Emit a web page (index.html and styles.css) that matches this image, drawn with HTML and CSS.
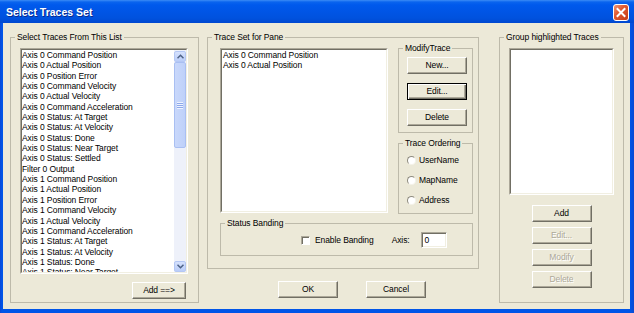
FILE: index.html
```html
<!DOCTYPE html>
<html>
<head>
<meta charset="utf-8">
<title>Select Traces Set</title>
<link rel="stylesheet" href="styles.css">
</head>
<body>
<div class="window">
  <div class="titlebar">
    <span class="title">Select Traces Set</span>
    <svg class="close" width="16" height="17" viewBox="0 0 16 17">
      <defs>
        <linearGradient id="cg" x1="0" y1="0" x2="1" y2="1">
          <stop offset="0" stop-color="#F29C7E"/>
          <stop offset="0.4" stop-color="#E15A31"/>
          <stop offset="1" stop-color="#C23914"/>
        </linearGradient>
      </defs>
      <rect x="0.5" y="0.5" width="15" height="16" rx="2.5" fill="url(#cg)" stroke="#fff"/>
      <path d="M4.5 5 L11.5 12 M11.5 5 L4.5 12" stroke="#fff" stroke-width="2" stroke-linecap="square"/>
    </svg>
  </div>
  <div class="client">
    <fieldset class="group g-source">
      <legend>Select Traces From This List</legend>
      <div class="group-body col">
        <div class="listbox lb-source">
          <div class="lb-inner">
            <ul class="items">
              <li>Axis 0 Command Position</li>
              <li>Axis 0 Actual Position</li>
              <li>Axis 0 Position Error</li>
              <li>Axis 0 Command Velocity</li>
              <li>Axis 0 Actual Velocity</li>
              <li>Axis 0 Command Acceleration</li>
              <li>Axis 0 Status: At Target</li>
              <li>Axis 0 Status: At Velocity</li>
              <li>Axis 0 Status: Done</li>
              <li>Axis 0 Status: Near Target</li>
              <li>Axis 0 Status: Settled</li>
              <li>Filter 0 Output</li>
              <li>Axis 1 Command Position</li>
              <li>Axis 1 Actual Position</li>
              <li>Axis 1 Position Error</li>
              <li>Axis 1 Command Velocity</li>
              <li>Axis 1 Actual Velocity</li>
              <li>Axis 1 Command Acceleration</li>
              <li>Axis 1 Status: At Target</li>
              <li>Axis 1 Status: At Velocity</li>
              <li>Axis 1 Status: Done</li>
              <li>Axis 1 Status: Near Target</li>
            </ul>
            <div class="scrollbar">
              <div class="sb-btn">
                <svg width="7" height="5" viewBox="0 0 7 5"><path d="M0.5 4.2 L3.5 1.2 L6.5 4.2" fill="none" stroke="#4D6185" stroke-width="1.5"/></svg>
              </div>
              <div class="sb-track">
                <div class="sb-thumb"><span class="grip"></span></div>
              </div>
              <div class="sb-btn">
                <svg width="7" height="5" viewBox="0 0 7 5"><path d="M0.5 0.8 L3.5 3.8 L6.5 0.8" fill="none" stroke="#4D6185" stroke-width="1.5"/></svg>
              </div>
            </div>
          </div>
        </div>
        <button class="btn btn-add">Add ==&gt;</button>
      </div>
    </fieldset>

    <div class="middle">
      <fieldset class="group g-pane">
        <legend>Trace Set for Pane</legend>
        <div class="group-body">
          <div class="pane-row">
            <div class="listbox lb-pane">
              <div class="lb-inner">
                <ul class="items pane-items">
                  <li>Axis 0 Command Position</li>
                  <li>Axis 0 Actual Position</li>
                </ul>
              </div>
            </div>
            <div class="side">
              <fieldset class="group g-modify">
                <legend>ModifyTrace</legend>
                <div class="group-body col stack">
                  <button class="btn">New...</button>
                  <button class="btn default">Edit...</button>
                  <button class="btn">Delete</button>
                </div>
              </fieldset>
              <fieldset class="group g-order">
                <legend>Trace Ordering</legend>
                <div class="group-body radios">
                  <div class="radio-row"><span class="radio"></span>UserName</div>
                  <div class="radio-row"><span class="radio"></span>MapName</div>
                  <div class="radio-row"><span class="radio"></span>Address</div>
                </div>
              </fieldset>
            </div>
          </div>
          <fieldset class="group g-band">
            <legend>Status Banding</legend>
            <div class="group-body band-row">
              <span class="check"></span>
              <span class="band-label">Enable Banding</span>
              <span class="axis-label">Axis:</span>
              <span class="field">0</span>
            </div>
          </fieldset>
        </div>
      </fieldset>
      <div class="dialog-buttons">
        <button class="btn">OK</button>
        <button class="btn">Cancel</button>
      </div>
    </div>

    <fieldset class="group g-group">
      <legend>Group highlighted Traces</legend>
      <div class="group-body col center">
        <div class="listbox lb-group"><div class="lb-inner"></div></div>
        <div class="group-buttons">
          <button class="btn">Add</button>
          <button class="btn disabled">Edit...</button>
          <button class="btn disabled">Modify</button>
          <button class="btn disabled">Delete</button>
        </div>
      </div>
    </fieldset>
  </div>
</div>
</body>
</html>
```

FILE: styles.css
```css
html, body {
  margin: 0;
  padding: 0;
}

body {
  background: #ECE9D8;
  font-family: "Liberation Sans", Arial, sans-serif;
  font-size: 8.5px;
  letter-spacing: -0.1px;
  color: #000;
}

.window {
  width: 634px;
  height: 313px;
  display: flex;
  flex-direction: column;
  background: linear-gradient(to right, #0A48D6 0, #0055E8 2px, #0055E8 630px, #0A4AD2 634px);
  overflow: hidden;
}

/* Title bar */
.titlebar {
  height: 23px;
  flex: none;
  display: flex;
  justify-content: space-between;
  align-items: flex-start;
  background: linear-gradient(to bottom, #3C8CF5 0, #0A64EE 2px, #0059EC 5px, #0055E5 12px, #0052DE 18px, #0048D0 23px);
}

.title {
  color: #fff;
  font-weight: bold;
  font-size: 10.5px;
  letter-spacing: 0;
  line-height: 25px;
  padding-left: 6px;
  text-shadow: 1px 1px 0 #0B2A8E;
}

.close {
  margin: 4px 5px 0 0;
  display: block;
}

/* Client area */
.client {
  flex: 1;
  margin: 0 4px 4px 3px;
  background: #ECE9D8;
  display: flex;
  align-items: flex-start;
  padding: 9px 0 0 7px;
}

.group {
  margin: 0;
  padding: 0;
  min-width: 0;
  box-sizing: border-box;
  border: 1px solid #BDBAAA;
}

.group > legend {
  padding: 0 2px;
  margin-left: 4px;
  line-height: 11px;
  height: 11px;
  white-space: nowrap;
}

.group-body.col {
  display: flex;
  flex-direction: column;
}

.group-body.center {
  align-items: center;
}

/* Buttons */
.btn {
  box-sizing: border-box;
  display: block;
  width: 60px;
  height: 17px;
  margin: 0;
  padding: 0;
  font: inherit;
  letter-spacing: inherit;
  line-height: 15px;
  text-align: center;
  color: #000;
  background: #ECE9D8;
  border: 1px solid;
  border-color: #fff #716F64 #716F64 #fff;
  box-shadow: inset -1px -1px 0 #ACA899;
  border-radius: 0;
}

.btn.default {
  border-color: #000;
  box-shadow: inset 1px 1px 0 #fff, inset -1px -1px 0 #716F64, inset -2px -2px 0 #ACA899;
}

.btn.disabled {
  color: #ACA899;
  text-shadow: 1px 1px 0 #fff;
}

/* List boxes */
.listbox {
  box-sizing: border-box;
  border: 1px solid;
  border-color: #ACA899 #fff #fff #ACA899;
  background: #fff;
  flex: none;
}

.lb-inner {
  box-sizing: border-box;
  height: 100%;
  border: 1px solid;
  border-color: #716F64 #F1EFE2 #F1EFE2 #716F64;
  display: flex;
  overflow: hidden;
}

.items {
  list-style: none;
  margin: 0;
  padding: 0;
  flex: 1;
  min-width: 0;
  line-height: 10.35px;
  white-space: nowrap;
  overflow: hidden;
}

.pane-items {
  padding-left: 1px;
}

/* Scrollbar */
.scrollbar {
  width: 12px;
  flex: none;
  display: flex;
  flex-direction: column;
  background: #EEF1FA;
  padding-top: 1px;
}

.sb-btn {
  height: 11px;
  flex: none;
  box-sizing: border-box;
  border: 1px solid #B4C7F4;
  border-radius: 2px;
  background: linear-gradient(to bottom, #D5E1FD, #BACDF8);
  display: flex;
  align-items: center;
  justify-content: center;
}

.sb-btn svg {
  display: block;
}

.sb-track {
  flex: 1;
  display: flex;
  flex-direction: column;
}

.sb-thumb {
  height: 86px;
  box-sizing: border-box;
  border: 1px solid #A9BFF2;
  border-radius: 2px;
  background: linear-gradient(to right, #C9D8FB, #BED0F9);
  display: flex;
  align-items: center;
  justify-content: center;
}

.grip {
  width: 6px;
  height: 7px;
  background: repeating-linear-gradient(to bottom, #EEF3FF 0, #EEF3FF 1px, #8DA8EA 1px, #8DA8EA 2px);
}

/* Left group */
.g-source {
  width: 189px;
  height: 271px;
  flex: none;
}

.lb-source {
  width: 168px;
  height: 226px;
  margin: 5px 0 0 9px;
}

.btn-add {
  width: 54px;
  align-self: flex-end;
  margin: 8px 12px 0 0;
}

/* Middle */
.middle {
  margin-left: 8px;
  width: 272px;
  flex: none;
}

.g-pane {
  width: 272px;
  height: 237px;
}

.pane-row {
  display: flex;
  align-items: flex-start;
  margin-top: 5px;
}

.lb-pane {
  width: 168px;
  height: 165px;
  margin-left: 12px;
}

.side {
  width: 75px;
  margin: -5px 0 0 10px;
  flex: none;
}

.g-modify {
  width: 75px;
  height: 90px;
}

.stack {
  padding: 3px 0 0 8px;
  gap: 9px;
}

.g-order {
  width: 75px;
  height: 76px;
  margin-top: 5px;
}

.radios {
  padding-top: 1px;
}

.radio-row {
  display: flex;
  align-items: center;
  height: 20px;
  padding-left: 8px;
}

.radio {
  width: 9px;
  height: 9px;
  box-sizing: border-box;
  border-radius: 50%;
  border: 1px solid;
  border-color: #8E8B7E #F4F2E8 #F4F2E8 #8E8B7E;
  background: #fff;
  margin-right: 3px;
  flex: none;
}

.g-band {
  width: 253px;
  height: 38px;
  margin: 4px 0 0 12px;
}

.band-row {
  display: flex;
  align-items: center;
  height: 16px;
  margin-top: 3px;
  padding-left: 80px;
}

.check {
  width: 9px;
  height: 9px;
  box-sizing: border-box;
  border: 1px solid;
  border-color: #ACA899 #fff #fff #ACA899;
  box-shadow: inset 1px 1px 0 #716F64;
  background: #fff;
  flex: none;
}

.band-label {
  margin-left: 5px;
}

.axis-label {
  margin-left: 18px;
}

.field {
  box-sizing: border-box;
  width: 26px;
  height: 16px;
  margin-left: 11px;
  padding-left: 3px;
  line-height: 14px;
  background: #fff;
  border: 1px solid;
  border-color: #ACA899 #fff #fff #ACA899;
  box-shadow: inset 1px 1px 0 #716F64, inset -1px -1px 0 #F1EFE2;
}

.dialog-buttons {
  display: flex;
  gap: 28px;
  padding-left: 71px;
  margin-top: 12px;
}

/* Right group */
.g-group {
  width: 125px;
  height: 271px;
  margin-left: 20px;
  flex: none;
}

.lb-group {
  width: 105px;
  height: 147px;
  margin-top: 5px;
}

.group-buttons {
  display: flex;
  flex-direction: column;
  gap: 5px;
  margin-top: 10px;
}
```
